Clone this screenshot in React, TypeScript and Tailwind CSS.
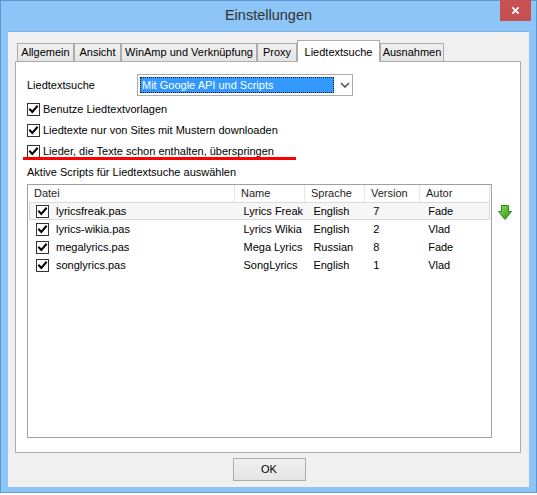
import React from 'react';

const font = { fontFamily: '"Liberation Sans", Arial, sans-serif' };

type Script = { file: string; name: string; lang: string; version: string; author: string };

const scripts: Script[] = [
  { file: 'lyricsfreak.pas', name: 'Lyrics Freak', lang: 'English', version: '7', author: 'Fade' },
  { file: 'lyrics-wikia.pas', name: 'Lyrics Wikia', lang: 'English', version: '2', author: 'Vlad' },
  { file: 'megalyrics.pas', name: 'Mega Lyrics', lang: 'Russian', version: '8', author: 'Fade' },
  { file: 'songlyrics.pas', name: 'SongLyrics', lang: 'English', version: '1', author: 'Vlad' },
];

const tabs = [
  { label: 'Allgemein', w: 'w-[57px]' },
  { label: 'Ansicht', w: 'w-[47px]' },
  { label: 'WinAmp und Verknüpfung', w: 'w-[136px]' },
  { label: 'Proxy', w: 'w-[40px]' },
  { label: 'Liedtextsuche', w: 'w-[83px]', active: true },
  { label: 'Ausnahmen', w: 'w-[64px]' },
];

function CheckBox() {
  return (
    <span className="flex h-[13px] w-[13px] shrink-0 items-center justify-center border border-[#333333] bg-white">
      <svg viewBox="0 0 11 11" className="h-[11px] w-[11px]">
        <path d="M2 5.5 L4.3 8 L9 2.5" fill="none" stroke="#000" strokeWidth="2" strokeLinecap="square" />
      </svg>
    </span>
  );
}

function CheckRow({ label }: { label: string }) {
  return (
    <div className="flex h-[20px] items-center gap-[3px]">
      <CheckBox />
      <span>{label}</span>
    </div>
  );
}

function GreenArrow() {
  return (
    <svg viewBox="0 0 14 15" className="h-[15px] w-[14px]">
      <defs>
        <linearGradient id="ga" x1="0" y1="0" x2="1" y2="1">
          <stop offset="0" stopColor="#8ee05a" />
          <stop offset="1" stopColor="#23930f" />
        </linearGradient>
      </defs>
      <path d="M3.5 0.5 H10.5 V6.5 H13.5 L7 14.5 L0.5 6.5 H3.5 Z" fill="url(#ga)" stroke="#2f8a1c" strokeWidth="1" />
    </svg>
  );
}

export default function App() {
  return (
    <div className="h-[495px] w-[537px] bg-white text-[11px] text-black" style={font}>
      <div className="flex h-[493px] w-[537px] flex-col border border-[#5b97d1] bg-[#8cc5f6]">
        {/* title bar */}
        <div className="relative flex h-[30px] shrink-0 items-center justify-center">
          <span className="-mt-[1px] text-[14.5px] text-[#333333]">Einstellungen</span>
          <div className="absolute right-[5px] top-[-1px] flex h-[21px] w-[31px] items-center justify-center bg-[#c75050]">
            <svg viewBox="0 0 10 10" className="h-[9px] w-[9px]">
              <path d="M1.5 1.5 L8.5 8.5 M8.5 1.5 L1.5 8.5" stroke="#fff" strokeWidth="2" />
            </svg>
          </div>
        </div>

        {/* client area */}
        <div className="mx-[7px] mb-[5px] flex h-[456px] flex-col border-t border-[#7fb2e3] bg-[#f0f0f0]">
          {/* tab strip */}
          <div className="ml-[9px] mt-[8px] flex h-[21px] items-end">
            {tabs.map((t) =>
              t.active ? (
                <div
                  key={t.label}
                  className={`${t.w} relative z-10 -mb-px flex h-[22px] items-start justify-center border border-b-0 border-[#acacac] bg-white pt-[3px]`}
                >
                  {t.label}
                </div>
              ) : (
                <div
                  key={t.label}
                  className={`${t.w} flex h-[18px] items-center justify-center border border-b-0 border-[#acacac] bg-gradient-to-b from-[#f0f0f0] to-[#e5e5e5]`}
                >
                  {t.label}
                </div>
              )
            )}
          </div>

          {/* tab panel */}
          <div className="ml-[7px] flex h-[392px] w-[506px] flex-col border border-[#acacac] bg-white pl-[11px]">
            <div className="mt-[12px] flex h-[22px] items-center">
              <span className="w-[110px]">Liedtextsuche</span>
              <div className="flex h-[22px] w-[216px] items-center border border-[#acacac] bg-white pl-[2px]">
                <div className="flex h-[16px] w-[194px] items-center border border-dotted border-[#1a1a1a] bg-[#3399ff] pl-[1px] text-white">
                  Mit Google API und Scripts
                </div>
                <svg viewBox="0 0 10 6" className="ml-[6px] h-[6px] w-[10px]">
                  <path d="M1 1 L5 5 L9 1" fill="none" stroke="#555" strokeWidth="1.6" />
                </svg>
              </div>
            </div>

            <div className="mt-[3px] flex flex-col gap-px">
              <CheckRow label="Benutze Liedtextvorlagen" />
              <CheckRow label="Liedtexte nur von Sites mit Mustern downloaden" />
              <CheckRow label="Lieder, die Texte schon enthalten, überspringen" />
            </div>
            <div className="-ml-[4px] -mt-[4px] h-[3px] w-[273px] bg-[#ff0000]" />

            <div className="mt-[4px] flex h-[16px] items-center">Aktive Scripts für Liedtextsuche auswählen</div>

            <div className="mt-[4px] flex items-start">
              <div className="h-[254px] w-[465px] border border-[#a0a0a0] bg-white">
                <div className="flex h-[17px]">
                  {[
                    ['Datei', 'w-[207px]'],
                    ['Name', 'w-[70px]'],
                    ['Sprache', 'w-[60px]'],
                    ['Version', 'w-[55px]'],
                    ['Autor', 'w-[70px]'],
                  ].map(([h, w]) => (
                    <div key={h} className={`${w} flex items-center border-r border-[#e5e5e5] pl-[6px] text-[#1e1e1e]`}>
                      {h}
                    </div>
                  ))}
                </div>
                {scripts.map((s, i) => (
                  <div
                    key={s.file}
                    className={`mx-px flex h-[18px] items-center border ${
                      i === 0 ? 'border-[#dadada] bg-[#f7f7f7]' : 'border-transparent'
                    }`}
                  >
                    <div className="flex w-[206px] items-center pl-[6px]">
                      <CheckBox />
                      <span className="ml-[7px]">{s.file}</span>
                    </div>
                    <div className="w-[70px] pl-[8px]">{s.name}</div>
                    <div className="w-[60px] pl-[8px]">{s.lang}</div>
                    <div className="w-[55px] pl-[8px]">{s.version}</div>
                    <div className="w-[69px] pl-[8px]">{s.author}</div>
                  </div>
                ))}
              </div>
              <div className="ml-[6px] mt-[21px]">
                <GreenArrow />
              </div>
            </div>
          </div>

          {/* buttons */}
          <div className="mt-[5px] flex justify-center">
            <button className="ml-[1px] flex h-[23px] w-[73px] items-center justify-center border border-[#acacac] bg-gradient-to-b from-[#f0f0f0] to-[#e5e5e5]">
              OK
            </button>
          </div>
        </div>
      </div>
    </div>
  );
}
